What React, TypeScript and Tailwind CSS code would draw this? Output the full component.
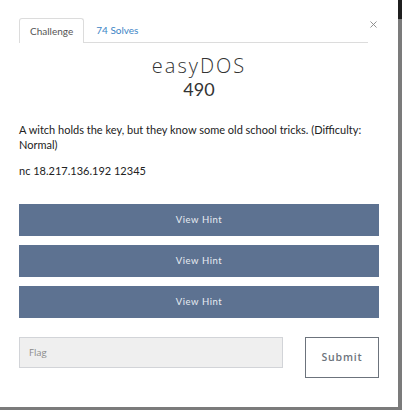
import { X } from 'lucide-react'

const hints = ['View Hint', 'View Hint', 'View Hint']

export default function App() {
  return (
    <div className="relative h-[410px] w-[402px] overflow-hidden bg-[#7b7b7b] font-['Lato',sans-serif]">
      {/* scrollbar stub behind the modal */}
      <div className="absolute right-0 top-0 h-[19px] w-[4px] bg-[#1f1f1f]" />

      <div className="relative h-[407px] w-[398px] bg-white px-[19px] pt-[18px]">
        {/* tabs */}
        <div className="flex items-start">
          <div className="flex w-[352px] border-b border-[#dcdcdc]">
            <div className="-mb-px flex h-[25px] items-center rounded-t-[3px] border border-b-0 border-[#dcdcdc] bg-white px-[10px] text-[10px] text-[#555]">
              Challenge
            </div>
            <div className="flex h-[24px] items-center px-[12px] text-[10px] text-[#3d85c6]">
              74 Solves
            </div>
          </div>
          <button className="ml-auto mt-[1px] text-[#888]">
            <X size={11} strokeWidth={2} />
          </button>
        </div>

        {/* title */}
        <div className="mt-[11px] text-center">
          <h1 className="font-['Open_Sans',sans-serif] text-[20px] font-light leading-[24px] tracking-[0.1em] text-[#333]">
            easyDOS
          </h1>
          <div className="text-[18px] leading-[22px] text-[#333]">490</div>
        </div>

        {/* description */}
        <p className="mt-[22px] text-[11px] leading-[15px] text-[#222]">
          A witch holds the key, but they know some old school tricks. (Difficulty: Normal)
        </p>
        <p className="mt-[11px] text-[11px] leading-[15px] text-[#222]">nc 18.217.136.192 12345</p>

        {/* hints */}
        <div className="mt-[26px] flex flex-col gap-[9px]">
          {hints.map((h, i) => (
            <button
              key={i}
              className="flex h-[32px] w-full items-center justify-center bg-[#5d7291] text-[9.5px] tracking-[0.06em] text-[#e8ecf2]"
            >
              {h}
            </button>
          ))}
        </div>

        {/* flag form */}
        <div className="mt-[19px] flex items-start">
          <input
            placeholder="Flag"
            className="h-[31px] w-[264px] border border-[#d2d4d8] bg-[#efefef] px-[9px] font-['Open_Sans',sans-serif] text-[9.5px] text-[#333] placeholder:text-[#8a8a8a] focus:outline-none"
          />
          <button className="ml-auto h-[41px] w-[74px] border border-[#6c737c] bg-white font-['Open_Sans',sans-serif] text-[10.5px] font-semibold tracking-[0.08em] text-[#6c737c]">
            Submit
          </button>
        </div>
      </div>
    </div>
  )
}
